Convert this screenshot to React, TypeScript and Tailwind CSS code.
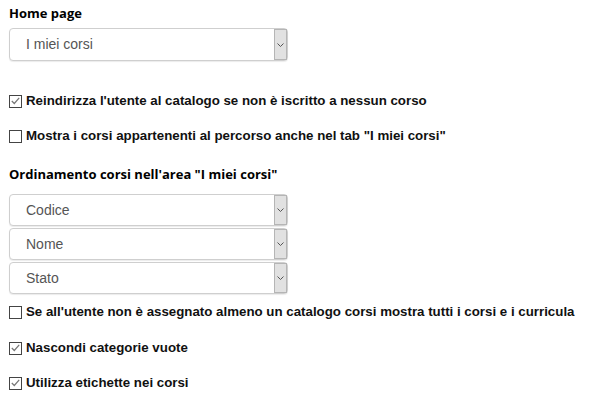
import React from 'react';

const Chevron = () => (
  <svg width="7" height="4" viewBox="0 0 7 4" fill="none">
    <path d="M0.5 0.5 L3.5 3.5 L6.5 0.5" stroke="#555" strokeWidth="1" />
  </svg>
);

const SelectBox = ({ value, h }: { value: string; h: string }) => (
  <div className={`flex w-[279px] ${h} rounded-[4px] border border-[#cfcfcf] bg-white shadow-[0_1px_1px_rgba(0,0,0,0.08)]`}>
    <div className="flex flex-1 items-center pl-4 text-[14px] text-[#555] font-['Liberation_Sans',Arial,sans-serif]">
      {value}
    </div>
    <div className="flex w-[13px] items-center justify-center border border-[#b5b5b5] bg-[#e1e1e1]">
      <Chevron />
    </div>
  </div>
);

const Check = ({ checked, label }: { checked?: boolean; label: string }) => (
  <div className="flex h-5 items-center gap-[4px]">
    <div className="flex h-[13px] w-[13px] items-center justify-center border border-[#444] bg-white">
      {checked && (
        <svg width="9" height="8" viewBox="0 0 9 8" fill="none">
          <path d="M0.8 4 L3.3 6.5 L8.2 0.8" stroke="#777" strokeWidth="1.2" />
        </svg>
      )}
    </div>
    <span className="text-[13.3px] font-bold text-[#111] font-['Liberation_Sans',Arial,sans-serif]">{label}</span>
  </div>
);

const App: React.FC = () => {
  return (
    <div className="min-h-[400px] bg-white pl-[9px] pt-[6px]">
      <div className="h-[14px] text-[13px] leading-[14px] font-bold text-black font-['Open_Sans',sans-serif]">Home page</div>
      <div className="mt-[8px]">
        <SelectBox value="I miei corsi" h="h-[33px]" />
      </div>

      <div className="mt-[30px]">
        <Check checked label="Reindirizza l'utente al catalogo se non è iscritto a nessun corso" />
      </div>
      <div className="mt-[15px]">
        <Check label={'Mostra i corsi appartenenti al percorso anche nel tab "I miei corsi"'} />
      </div>

      <div className="mt-[21px] h-[14px] text-[13px] leading-[14px] font-bold text-black font-['Open_Sans',sans-serif]">
        Ordinamento corsi nell'area "I miei corsi"
      </div>
      <div className="mt-[13px] flex flex-col gap-[2px]">
        <SelectBox value="Codice" h="h-[32px]" />
        <SelectBox value="Nome" h="h-[32px]" />
        <SelectBox value="Stato" h="h-[32px]" />
      </div>

      <div className="mt-[8px]">
        <Check label="Se all'utente non è assegnato almeno un catalogo corsi mostra tutti i corsi e i curricula" />
      </div>
      <div className="mt-[16px]">
        <Check checked label="Nascondi categorie vuote" />
      </div>
      <div className="mt-[15px]">
        <Check checked label="Utilizza etichette nei corsi" />
      </div>
    </div>
  );
};

export default App;
